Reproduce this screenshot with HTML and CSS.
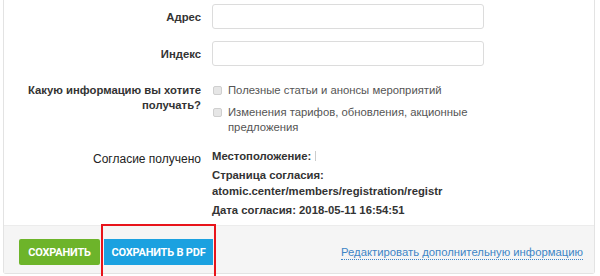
FILE: index.html
```html
<!DOCTYPE html>
<html>
<head>
  <meta charset="utf-8">
  <title>Дополнительная информация</title>
  <link rel="stylesheet" href="styles.css">
</head>
<body>
  <div class="page">
    <div class="panel">
      <div class="panel-body">
        <div class="form-row">
          <label class="form-label" for="address">Адрес</label>
          <input class="form-input" type="text" id="address">
        </div>

        <div class="form-row">
          <label class="form-label" for="index">Индекс</label>
          <input class="form-input" type="text" id="index">
        </div>

        <div class="form-row form-row-text">
          <div class="form-label">Какую информацию вы хотите получать?</div>
          <div class="checks">
            <label class="check"><span class="check-box"></span><span>Полезные статьи и анонсы мероприятий</span></label>
            <label class="check"><span class="check-box"></span><span>Изменения тарифов, обновления, акционные предложения</span></label>
          </div>
        </div>

        <div class="form-row form-row-consent">
          <div class="form-label form-label-plain">Согласие получено</div>
          <div class="consent">
            <p><b>Местоположение:</b> <span class="hidden-mark"></span></p>
            <p><b>Страница согласия:<br>atomic.center/members/registration/registr</b></p>
            <p><b>Дата согласия: 2018-05-11 16:54:51</b></p>
          </div>
        </div>
      </div>

      <div class="panel-footer">
        <button class="btn btn-green">Сохранить</button>
        <button class="btn btn-blue">Сохранить в PDF</button>
        <a class="edit-link" href="#">Редактировать дополнительную информацию</a>
      </div>
    </div>
  </div>
</body>
</html>
```

FILE: styles.css
```css
body {
  margin: 0;
  background-color: #fff;
  font-family: "Liberation Sans", Arial, sans-serif;
  font-size: 11.3px;
  color: #333;
}

.page {
  height: 276px;
  overflow: hidden;
}

.panel {
  margin-left: 3px;
  width: 590px;
  border: 1px solid #e3e3e3;
  border-top: none;
  border-radius: 0 0 3px 3px;
}

.panel-body {
  padding: 4px 0 4px;
}

.form-row {
  display: grid;
  grid-template-columns: 197px 272px;
  column-gap: 11px;
  align-items: center;
  margin-bottom: 12px;
}

.form-row-text {
  align-items: start;
  margin-top: 17px;
  margin-bottom: 13px;
  line-height: 15px;
}

.form-row-consent {
  align-items: start;
  margin-bottom: 0;
  line-height: 16px;
}

.form-label {
  text-align: right;
  font-weight: bold;
}

.form-label-plain {
  font-weight: normal;
  font-size: 12px;
  color: #222;
  padding-top: 3px;
}

.form-input {
  box-sizing: border-box;
  height: 25px;
  width: 272px;
  margin: 0;
  border: 1px solid #dcdcdc;
  border-radius: 3px;
  background: #fff;
}

.check {
  display: flex;
  align-items: flex-start;
  margin-bottom: 7px;
  color: #555;
}

.check:last-child {
  margin-bottom: 0;
}

.check-box {
  flex: none;
  box-sizing: border-box;
  width: 9px;
  height: 9px;
  margin: 3px 6px 0 1px;
  border: 1px solid #cfcfcf;
  border-radius: 2px;
  background-color: #e6e6e6;
}

.consent p {
  margin: 0 0 3px;
}

.hidden-mark {
  display: inline-block;
  width: 1px;
  height: 10px;
  margin-left: 1px;
  vertical-align: -1px;
  background-color: #ccc;
}

.panel-footer {
  display: flex;
  align-items: center;
  padding: 13px 11px 8px 11px;
  background-color: #f5f5f5;
  border-top: 1px solid #ececec;
}

.btn {
  height: 26px;
  border: none;
  border-radius: 2px;
  color: #fff;
  font-family: Roboto, "Liberation Sans", sans-serif;
  font-weight: bold;
  font-size: 11px;
  letter-spacing: -0.2px;
  text-transform: uppercase;
  cursor: pointer;
}

.btn-green {
  margin-left: 4px;
  width: 81px;
  background-color: #6db42a;
}

.btn-blue {
  position: relative;
  margin-left: 4px;
  width: 109px;
  background-color: #1ba1e0;
  border-radius: 0;
}

/* красная рамка-выделение поверх кнопки */
.btn-blue::after {
  content: "";
  position: absolute;
  top: -15px;
  left: -3px;
  right: -3px;
  bottom: -20px;
  border: 2px solid #e8141b;
}

.edit-link {
  margin-left: auto;
  color: #3d85c6;
  text-decoration: none;
  border-bottom: 1px dotted #3d85c6;
  line-height: 14px;
}
```
